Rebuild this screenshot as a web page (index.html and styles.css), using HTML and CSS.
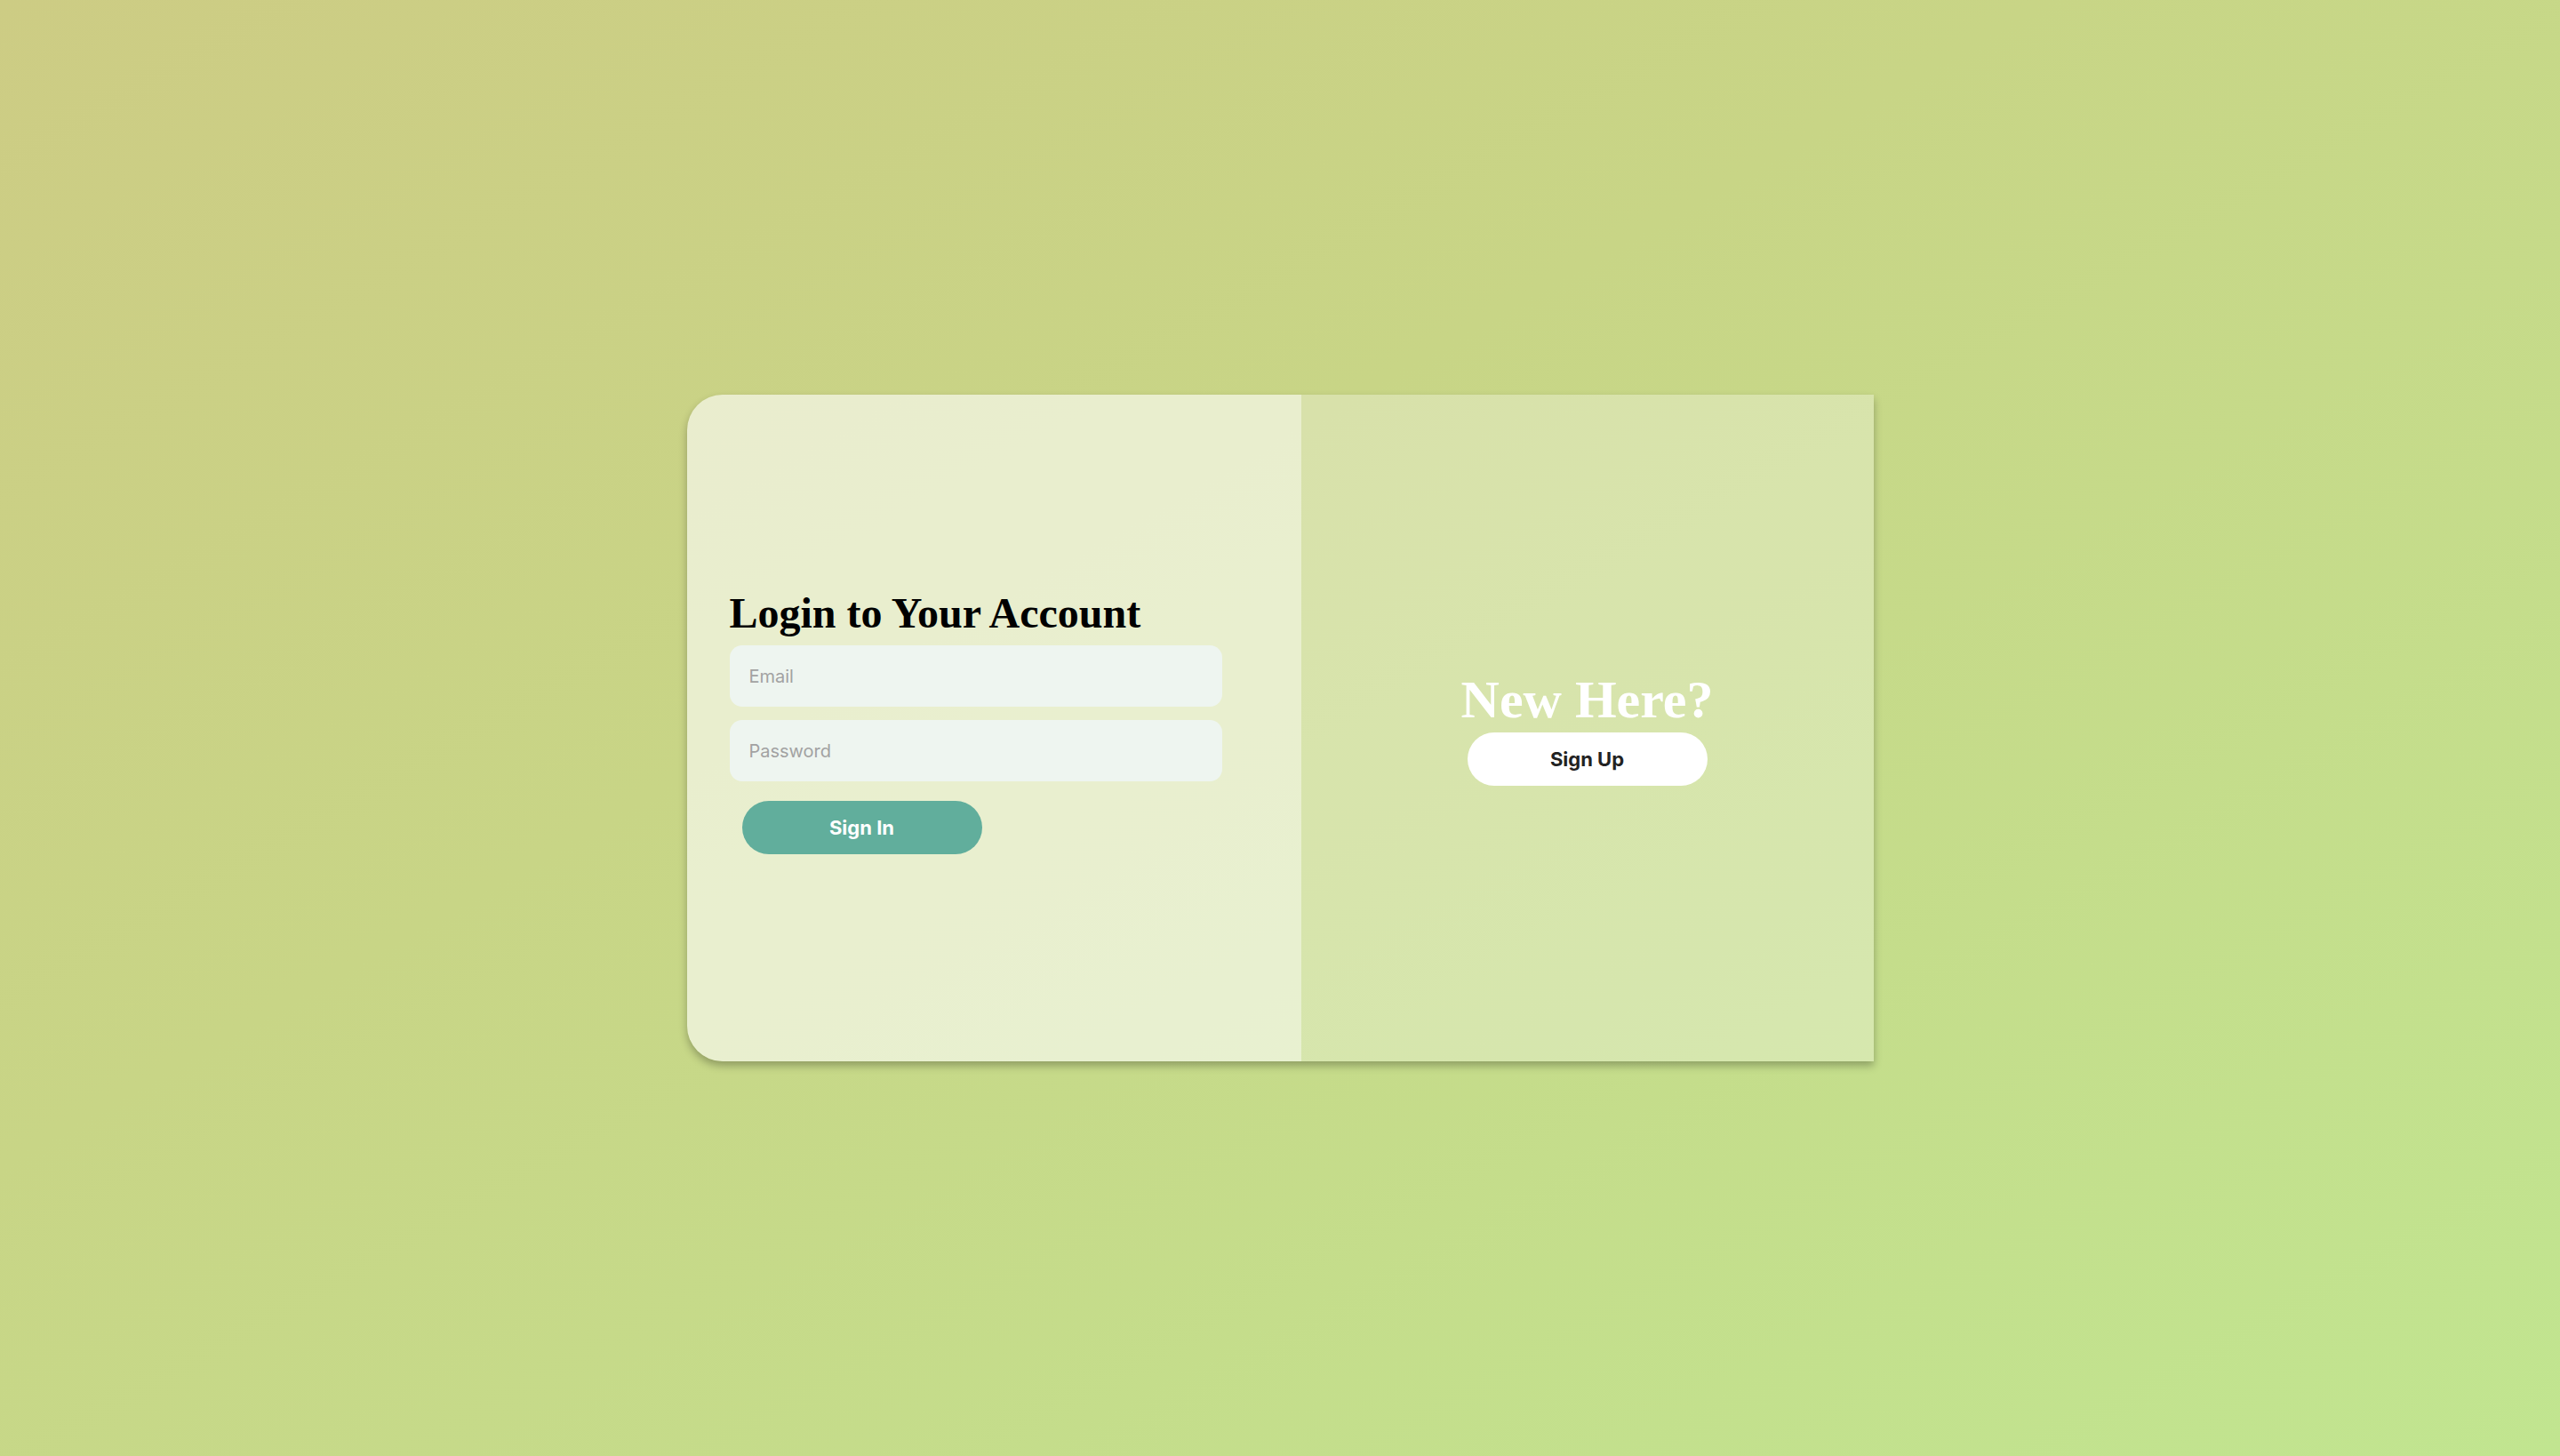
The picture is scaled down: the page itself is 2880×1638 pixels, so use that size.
FILE: index.html
```html
<!DOCTYPE html>
<html lang="en">
<head>
<meta charset="utf-8">
<title>Login</title>
<link rel="stylesheet" href="styles.css">
</head>
<body>
<div class="page">
  <div class="card">
    <div class="panel-left">
      <h1 class="title">Login to Your Account</h1>
      <input class="field" type="email" placeholder="Email">
      <input class="field" type="password" placeholder="Password">
      <button class="btn btn-signin" type="button">Sign In</button>
    </div>
    <div class="panel-right">
      <h1 class="title-new">New Here?</h1>
      <button class="btn btn-signup" type="button">Sign Up</button>
    </div>
  </div>
</div>
</body>
</html>
```
FILE: styles.css
```css
html, body {
  margin: 0;
  padding: 0;
  height: 100%;
}
body {
  background: linear-gradient(to bottom right, #cdcc84 0%, #c8d586 40%, #c1e590 100%);
  font-family: Inter, "Noto Sans", sans-serif;
}
.page {
  width: 100%;
  height: 100%;
  display: flex;
  align-items: center;
  justify-content: center;
}
.card {
  width: 1335px;
  height: 750px;
  display: flex;
  border-radius: 40px 0 0 40px;
  box-shadow: 0 5px 10px rgba(0, 0, 0, 0.28);
}
.panel-left {
  width: 691px;
  box-sizing: border-box;
  background: rgba(255, 255, 255, 0.6);
  border-radius: 40px 0 0 40px;
  display: flex;
  flex-direction: column;
  justify-content: center;
  align-items: flex-start;
  padding: 0 0 14px 48px;
}
.panel-right {
  flex: 1;
  background: rgba(255, 255, 255, 0.3);
  display: flex;
  flex-direction: column;
  justify-content: center;
  align-items: center;
}
.title {
  margin: 0 0 10px 0;
  font-family: "Liberation Serif", "Times New Roman", serif;
  font-weight: bold;
  font-size: 48px;
  line-height: 53px;
  color: #000;
}
.field {
  width: 554px;
  height: 69px;
  box-sizing: border-box;
  border: none;
  outline: none;
  border-radius: 14px;
  background: #eef5f0;
  padding: 0 22px;
  font-family: Inter, "Noto Sans", sans-serif;
  font-size: 20px;
  color: #333;
  margin: 0 0 15px 0;
}
.field::placeholder {
  color: #a2a2a2;
}
.btn {
  width: 270px;
  height: 60px;
  border: none;
  border-radius: 30px;
  font-family: Inter, "Noto Sans", sans-serif;
  font-weight: 700;
  font-size: 22px;
  cursor: pointer;
}
.btn-signin {
  margin: 7px 0 0 14px;
  background: #61ae9c;
  color: #fff;
}
.title-new {
  margin: 0 0 3px 0;
  font-family: "Liberation Serif", "Times New Roman", serif;
  font-weight: bold;
  font-size: 60px;
  line-height: 67px;
  color: #fff;
}
.btn-signup {
  background: #fff;
  color: #222;
}
```
